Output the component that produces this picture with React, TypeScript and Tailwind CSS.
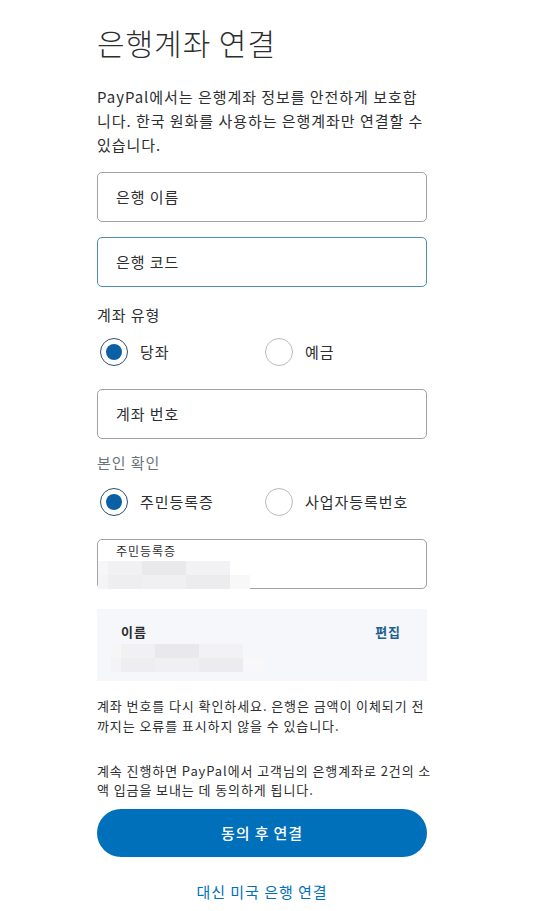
import React from 'react';

const font = { fontFamily: '"Noto Sans CJK KR", "Noto Sans", sans-serif' };

const Field = ({ label, focused }: { label: string; focused?: boolean }) => (
  <div
    className={`h-[50px] rounded-[5px] border flex items-center px-[18px] text-[15px] text-[#2c2e2f] ${
      focused ? 'border-[#4a8fb0]' : 'border-[#9da3a6]'
    }`}
  >
    {label}
  </div>
);

const Radio = ({ label, checked }: { label: string; checked?: boolean }) => (
  <div className="flex items-center gap-[12px] pl-[3px]">
    <span
      className={`w-[28px] h-[28px] rounded-full border flex items-center justify-center bg-white ${
        checked ? 'border-[#2c4f6b] border-[1.5px]' : 'border-[#b7bcbf]'
      }`}
    >
      {checked && <span className="w-[16px] h-[16px] rounded-full bg-[#0b5fa5]" />}
    </span>
    <span className="text-[15px] text-[#2c2e2f]">{label}</span>
  </div>
);

const Blur = () => (
  <div className="flex flex-col">
    <div className="flex h-[14px]">
      <div className="w-[10px] bg-[#f6f6f7]" />
      <div className="w-[34px] bg-[#f1f1f3]" />
      <div className="w-[44px] bg-[#e9e9ec]" />
      <div className="w-[44px] bg-[#f2f2f4]" />
    </div>
    <div className="flex h-[14px]">
      <div className="w-[10px] bg-[#f4f4f6]" />
      <div className="w-[34px] bg-[#eeeef0]" />
      <div className="w-[44px] bg-[#f0f0f2]" />
      <div className="w-[44px] bg-[#ececef]" />
      <div className="w-[20px] bg-[#f8f8f9]" />
    </div>
  </div>
);

export default function App() {
  return (
    <div className="min-h-screen bg-white text-[#2c2e2f] tracking-[0.06em]" style={font}>
      <div className="ml-[97px] w-[330px] pt-[22px] pb-[10px] flex flex-col">
        <h1 className="text-[30px] leading-[40px] font-light text-[#2c2e2f]">은행계좌 연결</h1>

        <p className="mt-[23px] text-[15px] leading-[24px] whitespace-nowrap">
          PayPal에서는 은행계좌 정보를 안전하게 보호합
          <br />
          니다. 한국 원화를 사용하는 은행계좌만 연결할 수
          <br />
          있습니다.
        </p>

        <div className="mt-[15px] flex flex-col gap-[15px]">
          <Field label="은행 이름" />
          <Field label="은행 코드" focused />
        </div>

        <div className="mt-[17px] text-[15px] leading-[22px]">계좌 유형</div>
        <div className="mt-[12px] grid grid-cols-2">
          <Radio label="당좌" checked />
          <Radio label="예금" />
        </div>

        <div className="mt-[23px]">
          <Field label="계좌 번호" />
        </div>

        <div className="mt-[13px] text-[15px] leading-[22px] text-[#6c7378]">본인 확인</div>
        <div className="mt-[14px] grid grid-cols-2">
          <Radio label="주민등록증" checked />
          <Radio label="사업자등록번호" />
        </div>

        <div className="mt-[23px] h-[50px] rounded-[5px] border border-[#9da3a6] px-[18px] pt-[3px] flex flex-col">
          <span className="text-[12px] leading-[16px] text-[#2c2e2f]">주민등록증</span>
          <div className="-ml-[18px] mt-[2px]">
            <Blur />
          </div>
        </div>

        <div className="mt-[20px] h-[72px] bg-[#f5f7fa] px-[24px] pt-[14px] flex justify-between">
          <div className="flex flex-col">
            <span className="text-[13px] leading-[18px] font-bold">이름</span>
            <div className="-ml-[10px] mt-[3px]">
              <Blur />
            </div>
          </div>
          <span className="text-[13px] leading-[18px] font-bold text-[#1f5f8f] mr-[2px]">편집</span>
        </div>

        <p className="mt-[15px] text-[13px] leading-[20px] whitespace-nowrap tracking-[0.07em]">
          계좌 번호를 다시 확인하세요. 은행은 금액이 이체되기 전
          <br />
          까지는 오류를 표시하지 않을 수 있습니다.
        </p>
        <p className="mt-[25px] text-[13px] leading-[19px] whitespace-nowrap tracking-[0.07em]">
          계속 진행하면 PayPal에서 고객님의 은행계좌로 2건의 소
          <br />
          액 입금을 보내는 데 동의하게 됩니다.
        </p>

        <button className="mt-[10px] h-[48px] rounded-full bg-[#0070ba] text-white text-[15px] font-medium tracking-[0.06em]">
          동의 후 연결
        </button>

        <a className="mt-[24px] text-center text-[15px] text-[#0070ba]">대신 미국 은행 연결</a>
      </div>
    </div>
  );
}
